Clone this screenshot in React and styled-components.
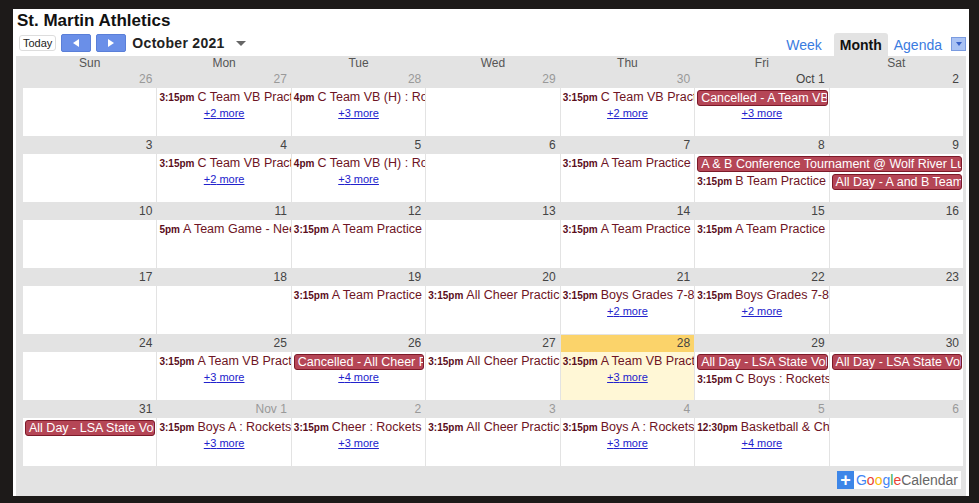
import React from 'react';
import styled, { createGlobalStyle } from 'styled-components';

const Global = createGlobalStyle`
  body { margin: 0; background: #1d1a19; font-family: "Liberation Sans", Arial, sans-serif; }
`;

const Panel = styled.div`
  margin: 9px 10px 0 13px;
  height: 487px;
  background: #fff;
  display: flex;
  flex-direction: column;
`;

const Title = styled.div`
  font-weight: bold;
  font-size: 17px;
  padding: 2px 0 0 4px;
  height: 22px;
  color: #111;
`;

const Toolbar = styled.div`
  display: flex;
  align-items: flex-end;
  height: 23px;
  padding: 0 3px 0 6px;
`;

const Left = styled.div`
  display: flex;
  align-items: center;
  gap: 5px;
  flex: 1;
  padding-bottom: 4px;
`;

const TodayBtn = styled.div`
  font-size: 11px;
  padding: 1px 3px;
  border: 1px solid #ddd;
  border-radius: 3px;
  color: #222;
`;

const Arrow = styled.div`
  width: 28px;
  height: 16px;
  background: #6a8fe8;
  border: 1px solid #5a7fd8;
  border-radius: 2px;
  display: flex;
  align-items: center;
  justify-content: center;
`;

const Month = styled.div`
  font-weight: bold;
  font-size: 14px;
  color: #222;
  margin-left: 1px;
  letter-spacing: 0.3px;
`;

const Caret = styled.div`
  margin-left: 6px;
  width: 0; height: 0;
  border-left: 5px solid transparent;
  border-right: 5px solid transparent;
  border-top: 5px solid #666;
`;

const Tab = styled.div`
  font-size: 14px;
  padding: 4px 6px 3px;
  color: ${p => (p.$active ? '#111' : '#3a7be0')};
  font-weight: ${p => (p.$active ? 'bold' : 'normal')};
  background: ${p => (p.$active ? '#e3e3e3' : 'transparent')};
  border-radius: 3px 3px 0 0;
  margin-left: ${p => (p.$active ? '6px' : '0')};
`;

const DropSq = styled.div`
  width: 13px; height: 12px;
  margin: 0 0 5px 3px;
  background: #a9c2f3;
  border: 1px solid #7a9be0;
  display: flex; align-items: center; justify-content: center;
  &::after { content: ''; border-left: 3px solid transparent; border-right: 3px solid transparent; border-top: 4px solid #3760c8; }
`;

const Grid = styled.div`
  flex: 1;
  background: #e3e3e3;
  margin: 0 3px;
  display: flex;
  flex-direction: column;
`;

const DayNames = styled.div`
  display: grid;
  grid-template-columns: repeat(7, 1fr);
  column-gap: 1px;
  padding: 0 3px 0 7px;
  height: 15px;
  font-size: 12px;
  color: #555;
  text-align: center;
  line-height: 15px;
`;

const Weeks = styled.div`
  display: flex;
  flex-direction: column;
  gap: 1px;
  padding: 0 3px 0 7px;
`;

const Week = styled.div`
  display: grid;
  grid-template-columns: repeat(7, minmax(0, 1fr));
  grid-template-rows: 17px 18px 17px 13px;
  column-gap: 1px;
  height: 65px;
  overflow: hidden;
`;

const DateNum = styled.div`
  grid-row: 1;
  grid-column: ${p => p.$col};
  background: ${p => (p.$today ? '#fbd36a' : '#e3e3e3')};
  text-align: right;
  padding-right: 4px;
  font-size: 12px;
  line-height: 17px;
  color: ${p => (p.$out ? '#999' : '#444')};
`;

const Body = styled.div`
  grid-row: 2 / -1;
  grid-column: ${p => p.$col};
  background: ${p => (p.$today ? '#fff7d6' : '#fff')};
`;

const Event = styled.div`
  grid-row: ${p => p.$row};
  grid-column: ${p => p.$col} / span ${p => p.$span || 1};
  white-space: nowrap;
  overflow: hidden;
  font-size: 12.5px;
  line-height: 18px;
  color: #6e1424;
  padding-left: 2px;
  z-index: 1;
  b { font-size: 10px; color: #5a0d1b; margin-right: 3px; }
`;

const Chip = styled.div`
  grid-row: ${p => p.$row};
  grid-column: ${p => p.$col} / span ${p => p.$span || 1};
  margin: 2px 1px 1px 2px;
  height: 14px;
  background: #b54656;
  border: 1px solid #7c1a29;
  border-radius: 3px;
  color: #fff;
  font-size: 12.5px;
  line-height: 14px;
  padding-left: 3px;
  white-space: nowrap;
  overflow: hidden;
  z-index: 1;
`;

const More = styled.div`
  grid-row: ${p => p.$row};
  grid-column: ${p => p.$col};
  text-align: center;
  font-size: 11px;
  line-height: 15px;
  z-index: 1;
  span { color: #2222cc; text-decoration: underline; }
`;

const Footer = styled.div`
  flex: 1;
  display: flex;
  justify-content: flex-end;
  align-items: center;
  padding: 0 5px 2px 0;
`;

const Badge = styled.div`
  display: flex;
  align-items: center;
  background: #fff;
  height: 18px;
  font-size: 14px;
  padding-right: 3px;
  .plus { width: 17px; height: 18px; background: #3d86e8; color: #fff; display:flex; align-items:center; justify-content:center; font-size: 18px; font-weight: bold; margin-right: 2px; }
  .cal { color: #666; }
`;

const days = ['Sun', 'Mon', 'Tue', 'Wed', 'Thu', 'Fri', 'Sat'];

const weeks = [
  {
    dates: [['26', 1], ['27', 1], ['28', 1], ['29', 1], ['30', 1], ['Oct 1'], ['2']],
    items: [
      { t: 'e', c: 2, r: 2, time: '3:15pm', text: 'C Team VB Practice' }, { t: 'm', c: 2, r: 3, n: 2 },
      { t: 'e', c: 3, r: 2, time: '4pm', text: 'C Team VB (H) : Rockets' }, { t: 'm', c: 3, r: 3, n: 3 },
      { t: 'e', c: 5, r: 2, time: '3:15pm', text: 'C Team VB Practice' }, { t: 'm', c: 5, r: 3, n: 2 },
      { t: 'c', c: 6, r: 2, text: 'Cancelled - A Team VB' }, { t: 'm', c: 6, r: 3, n: 3 },
    ],
  },
  {
    dates: [['3'], ['4'], ['5'], ['6'], ['7'], ['8'], ['9']],
    items: [
      { t: 'e', c: 2, r: 2, time: '3:15pm', text: 'C Team VB Practice' }, { t: 'm', c: 2, r: 3, n: 2 },
      { t: 'e', c: 3, r: 2, time: '4pm', text: 'C Team VB (H) : Rockets' }, { t: 'm', c: 3, r: 3, n: 3 },
      { t: 'e', c: 5, r: 2, time: '3:15pm', text: 'A Team Practice' },
      { t: 'c', c: 6, r: 2, s: 2, text: 'A & B Conference Tournament @ Wolf River Lutheran' },
      { t: 'e', c: 6, r: 3, time: '3:15pm', text: 'B Team Practice' },
      { t: 'c', c: 7, r: 3, text: 'All Day - A and B Team' },
    ],
  },
  {
    dates: [['10'], ['11'], ['12'], ['13'], ['14'], ['15'], ['16']],
    items: [
      { t: 'e', c: 2, r: 2, time: '5pm', text: 'A Team Game - Neenah' },
      { t: 'e', c: 3, r: 2, time: '3:15pm', text: 'A Team Practice' },
      { t: 'e', c: 5, r: 2, time: '3:15pm', text: 'A Team Practice' },
      { t: 'e', c: 6, r: 2, time: '3:15pm', text: 'A Team Practice' },
    ],
  },
  {
    dates: [['17'], ['18'], ['19'], ['20'], ['21'], ['22'], ['23']],
    items: [
      { t: 'e', c: 3, r: 2, time: '3:15pm', text: 'A Team Practice' },
      { t: 'e', c: 4, r: 2, time: '3:15pm', text: 'All Cheer Practice' },
      { t: 'e', c: 5, r: 2, time: '3:15pm', text: 'Boys Grades 7-8' }, { t: 'm', c: 5, r: 3, n: 2 },
      { t: 'e', c: 6, r: 2, time: '3:15pm', text: 'Boys Grades 7-8' }, { t: 'm', c: 6, r: 3, n: 2 },
    ],
  },
  {
    dates: [['24'], ['25'], ['26'], ['27'], ['28', 0, 1], ['29'], ['30']],
    items: [
      { t: 'e', c: 2, r: 2, time: '3:15pm', text: 'A Team VB Practice' }, { t: 'm', c: 2, r: 3, n: 3 },
      { t: 'c', c: 3, r: 2, text: 'Cancelled - All Cheer Practice' }, { t: 'm', c: 3, r: 3, n: 4 },
      { t: 'e', c: 4, r: 2, time: '3:15pm', text: 'All Cheer Practice' },
      { t: 'e', c: 5, r: 2, time: '3:15pm', text: 'A Team VB Practice' }, { t: 'm', c: 5, r: 3, n: 3 },
      { t: 'c', c: 6, r: 2, text: 'All Day - LSA State Volleyball' },
      { t: 'e', c: 6, r: 3, time: '3:15pm', text: 'C Boys : Rockets' },
      { t: 'c', c: 7, r: 2, text: 'All Day - LSA State Volleyball' },
    ],
  },
  {
    dates: [['31'], ['Nov 1', 1], ['2', 1], ['3', 1], ['4', 1], ['5', 1], ['6', 1]],
    items: [
      { t: 'c', c: 1, r: 2, text: 'All Day - LSA State Volleyball' },
      { t: 'e', c: 2, r: 2, time: '3:15pm', text: 'Boys A : Rockets' }, { t: 'm', c: 2, r: 3, n: 3 },
      { t: 'e', c: 3, r: 2, time: '3:15pm', text: 'Cheer : Rockets' }, { t: 'm', c: 3, r: 3, n: 3 },
      { t: 'e', c: 4, r: 2, time: '3:15pm', text: 'All Cheer Practice' },
      { t: 'e', c: 5, r: 2, time: '3:15pm', text: 'Boys A : Rockets' }, { t: 'm', c: 5, r: 3, n: 3 },
      { t: 'e', c: 6, r: 2, time: '12:30pm', text: 'Basketball & Cheer' }, { t: 'm', c: 6, r: 3, n: 4 },
    ],
  },
];

const Tri = ({ dir }) => (
  <svg width="6" height="8" viewBox="0 0 6 8">
    <path d={dir === 'l' ? 'M6 0 L0 4 L6 8 Z' : 'M0 0 L6 4 L0 8 Z'} fill="#fff" />
  </svg>
);

export default function App() {
  return (
    <>
      <Global />
      <Panel>
        <Title>St. Martin Athletics</Title>
        <Toolbar>
          <Left>
            <TodayBtn>Today</TodayBtn>
            <Arrow><Tri dir="l" /></Arrow>
            <Arrow><Tri dir="r" /></Arrow>
            <Month>October 2021</Month>
            <Caret />
          </Left>
          <Tab>Week</Tab>
          <Tab $active>Month</Tab>
          <Tab>Agenda</Tab>
          <DropSq />
        </Toolbar>
        <Grid>
          <DayNames>{days.map(d => <div key={d}>{d}</div>)}</DayNames>
          <Weeks>
            {weeks.map((w, wi) => (
              <Week key={wi}>
                {w.dates.map(([d, out, today], i) => (
                  <React.Fragment key={i}>
                    <DateNum $col={i + 1} $out={out} $today={today}>{d}</DateNum>
                    <Body $col={i + 1} $today={today} />
                  </React.Fragment>
                ))}
                {w.items.map((it, i) => {
                  if (it.t === 'e')
                    return <Event key={i} $col={it.c} $row={it.r}><b>{it.time}</b>{it.text}</Event>;
                  if (it.t === 'c')
                    return <Chip key={i} $col={it.c} $row={it.r} $span={it.s}>{it.text}</Chip>;
                  return <More key={i} $col={it.c} $row={it.r}><span>+{it.n} more</span></More>;
                })}
              </Week>
            ))}
          </Weeks>
          <Footer>
            <Badge>
              <div className="plus">+</div>
              <span style={{ color: '#4285f4' }}>G</span>
              <span style={{ color: '#ea4335' }}>o</span>
              <span style={{ color: '#fbbc05' }}>o</span>
              <span style={{ color: '#4285f4' }}>g</span>
              <span style={{ color: '#34a853' }}>l</span>
              <span style={{ color: '#ea4335' }}>e</span>
              <span className="cal">Calendar</span>
            </Badge>
          </Footer>
        </Grid>
      </Panel>
    </>
  );
}
